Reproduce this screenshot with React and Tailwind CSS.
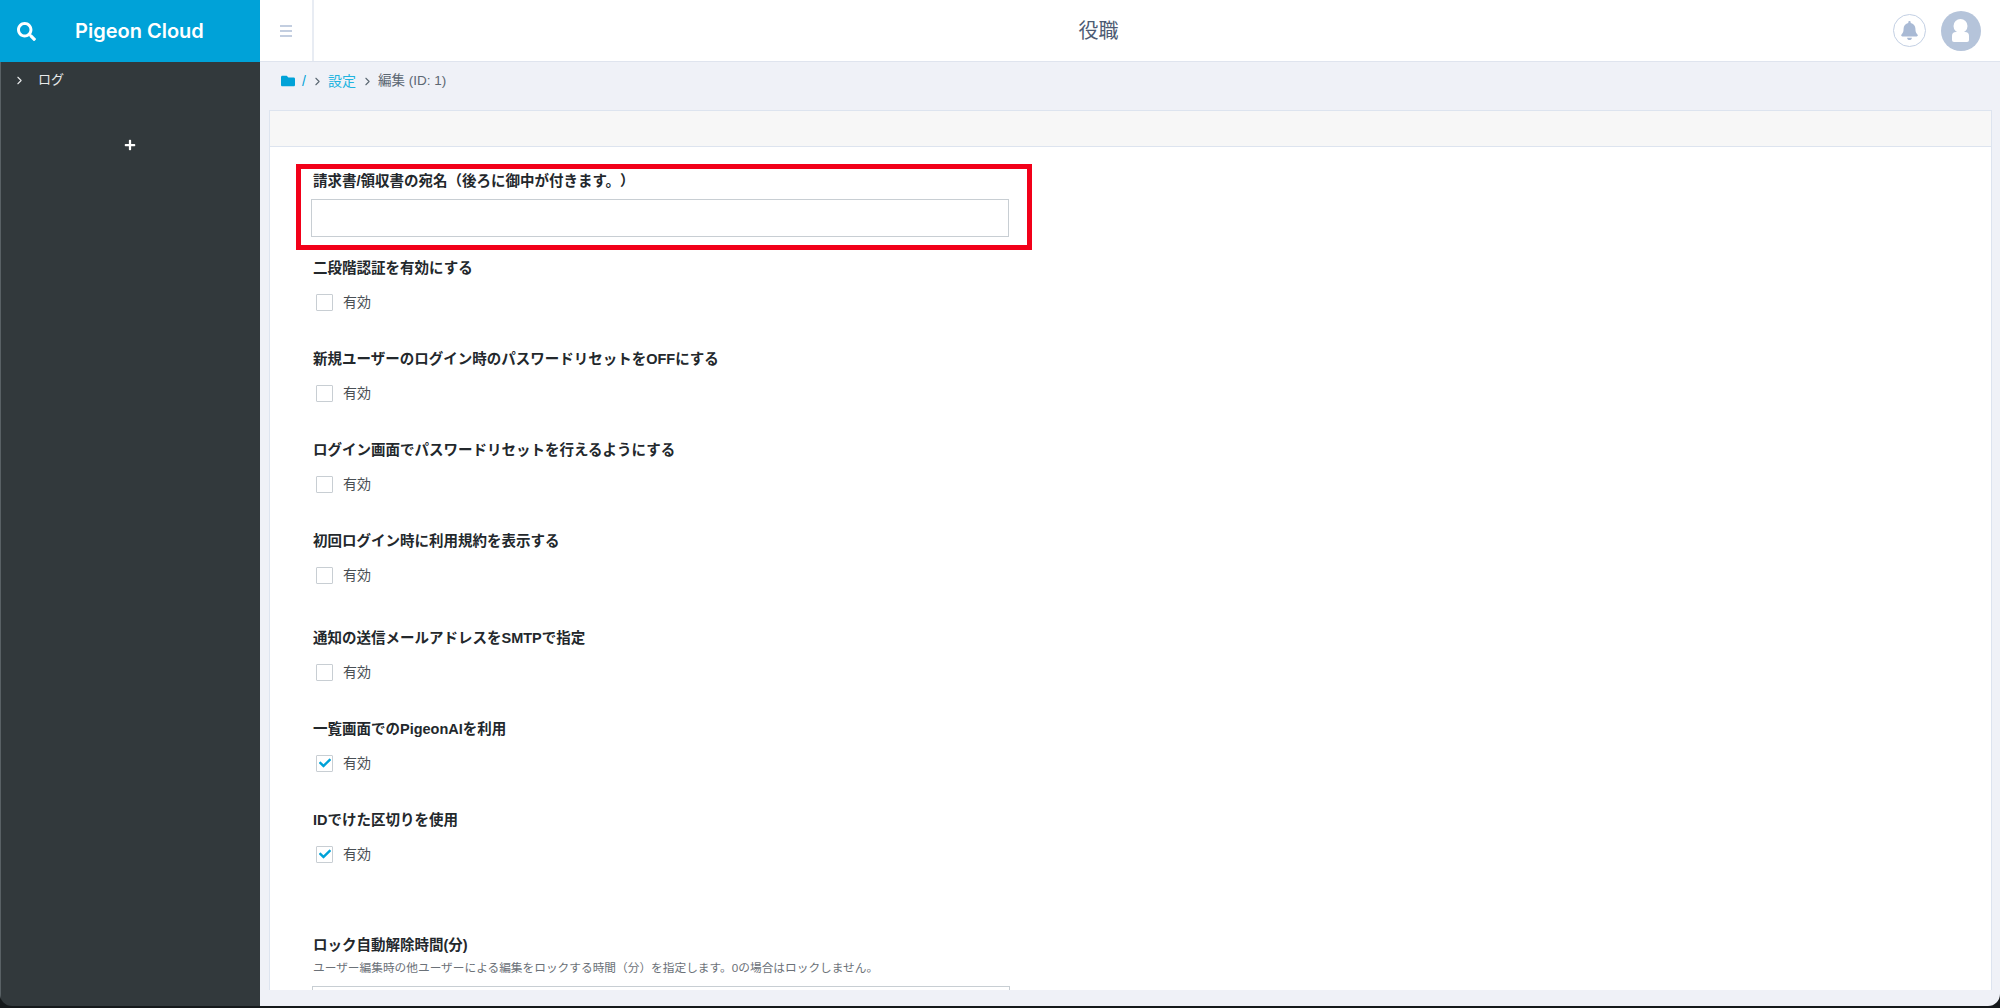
import { FaBell, FaCheck, FaFolder, FaPlus, FaSearch } from "react-icons/fa";
import { ChevronRight } from "lucide-react";

const font = { fontFamily: '"Liberation Sans", "Noto Sans CJK JP", sans-serif' };

function CheckRow({ label, checked, className = "" }) {
  return (
    <div className={className}>
      <div className="text-[14.5px] leading-[20px] font-bold text-[#23282c]">{label}</div>
      <div className="mt-[14px] ml-[3px] flex h-[20px] items-center gap-[10px]">
        <span className="relative block size-[17px] rounded-[1px] border border-[#c8ced3] bg-white">
          {checked ? <FaCheck className="absolute left-[2px] top-[1px] size-[12px] text-[#00a2d8]" /> : null}
        </span>
        <span className="text-[14px] text-[#4a4f54]">有効</span>
      </div>
    </div>
  );
}

export default function App() {
  return (
    <div className="h-[1008px] w-[2000px] overflow-hidden bg-[#15191b] text-[#23282c] [text-spacing-trim:space-all]" style={font}>
      <div className="flex h-[1006px] overflow-hidden rounded-b-[12px]">
        <aside className="flex w-[260px] shrink-0 flex-col border-l border-[#596165] bg-[#32393c]">
          <div className="-ml-px flex h-[62px] items-center bg-[#00a2d8] text-white">
            <FaSearch className="ml-[17px] size-[19px]" />
            <span className="ml-[39px] font-['Inter'] text-[20px] font-semibold">Pigeon Cloud</span>
          </div>
          <div className="flex h-[36px] items-center pl-[12px] text-[13px] text-[#e8eaeb]">
            <ChevronRight className="size-[13px]" />
            <span className="ml-[12px]">ログ</span>
          </div>
          <div className="mt-[41px] flex justify-center pr-[1px] text-white">
            <FaPlus className="size-[12px]" />
          </div>
        </aside>

        <div className="flex min-w-0 flex-1 flex-col bg-[#eff1f7]">
          <header className="flex h-[62px] shrink-0 items-center border-b border-[#dfe4ee] bg-white">
            <div className="flex h-full w-[54px] shrink-0 items-center justify-center border-r-2 border-[#e8ecf3]">
              <div className="flex w-[12px] flex-col gap-[3px]">
                <span className="h-[2px] bg-[#c3cee0]" />
                <span className="h-[2px] bg-[#c3cee0]" />
                <span className="h-[2px] bg-[#c3cee0]" />
              </div>
            </div>
            <h1 className="flex-1 pr-[10px] text-center text-[20px] font-normal text-[#4d5b73]">役職</h1>
            <div className="mr-[19px] flex items-center gap-[15px]">
              <span className="grid size-[33px] place-items-center rounded-full border border-[#c3d0e4] text-[#a9bad5]">
                <FaBell className="size-[19px]" />
              </span>
              <span className="grid size-[40px] place-items-center rounded-full bg-[#b5c4da]">
                <svg viewBox="0 0 40 40" className="size-[40px]" fill="#fff">
                  <circle cx="19.5" cy="15" r="7" />
                  <path d="M11 25a4 4 0 0 1 4-4h9a4 4 0 0 1 4 4v4a2 2 0 0 1-2 2H13a2 2 0 0 1-2-2z" />
                </svg>
              </span>
            </div>
          </header>

          <nav className="flex h-[38px] shrink-0 items-center pl-[21px] text-[14px] text-[#5c6873]">
            <FaFolder className="size-[14px] text-[#00a2d8]" />
            <span className="ml-[7px] text-[#00a2d8]">/</span>
            <ChevronRight className="ml-[5px] size-[13px]" />
            <span className="ml-[4px] text-[#20b4e0]">設定</span>
            <ChevronRight className="ml-[5px] size-[13px]" />
            <span className="ml-[4px] text-[13.5px]">編集 (ID: 1)</span>
          </nav>

          <main className="mt-[10px] mr-[8px] ml-[9px] flex h-[880px] flex-col overflow-hidden border-x border-t border-[#dde4ef] bg-white">
            <div className="h-[36px] shrink-0 border-b border-[#dde4ef] bg-[#f7f7f7]" />
            <div className="pl-[43px] pt-[17px]">
              <div className="-ml-[17px] w-[736px] border-[5px] border-[#f20019] pt-[2px] pb-[8px] pl-[11px]">
                <div className="pl-[1px] text-[14.5px] leading-[20px] font-bold">請求書/領収書の宛名（後ろに御中が付きます。）</div>
                <div className="mt-[8px] -ml-px h-[38px] w-[698px] border border-[#c8ced3] bg-white" />
              </div>

              <CheckRow className="mt-[8px]" label="二段階認証を有効にする" />
              <CheckRow className="mt-[37px]" label="新規ユーザーのログイン時のパスワードリセットをOFFにする" />
              <CheckRow className="mt-[37px]" label="ログイン画面でパスワードリセットを行えるようにする" />
              <CheckRow className="mt-[37px]" label="初回ログイン時に利用規約を表示する" />
              <CheckRow className="mt-[43px]" label="通知の送信メールアドレスをSMTPで指定" />
              <CheckRow className="mt-[37px]" label="一覧画面でのPigeonAIを利用" checked />
              <CheckRow className="mt-[37px]" label="IDでけた区切りを使用" checked />

              <div className="mt-[71px] text-[14.5px] leading-[20px] font-bold">ロック自動解除時間(分)</div>
              <div className="mt-[4px] text-[11.7px] leading-[18px] text-[#6b7178]">
                ユーザー編集時の他ユーザーによる編集をロックする時間（分）を指定します。0の場合はロックしません。
              </div>
              <div className="mt-[9px] -ml-px h-[38px] w-[698px] border border-[#c8ced3] bg-white" />
            </div>
          </main>
        </div>
      </div>
    </div>
  );
}
